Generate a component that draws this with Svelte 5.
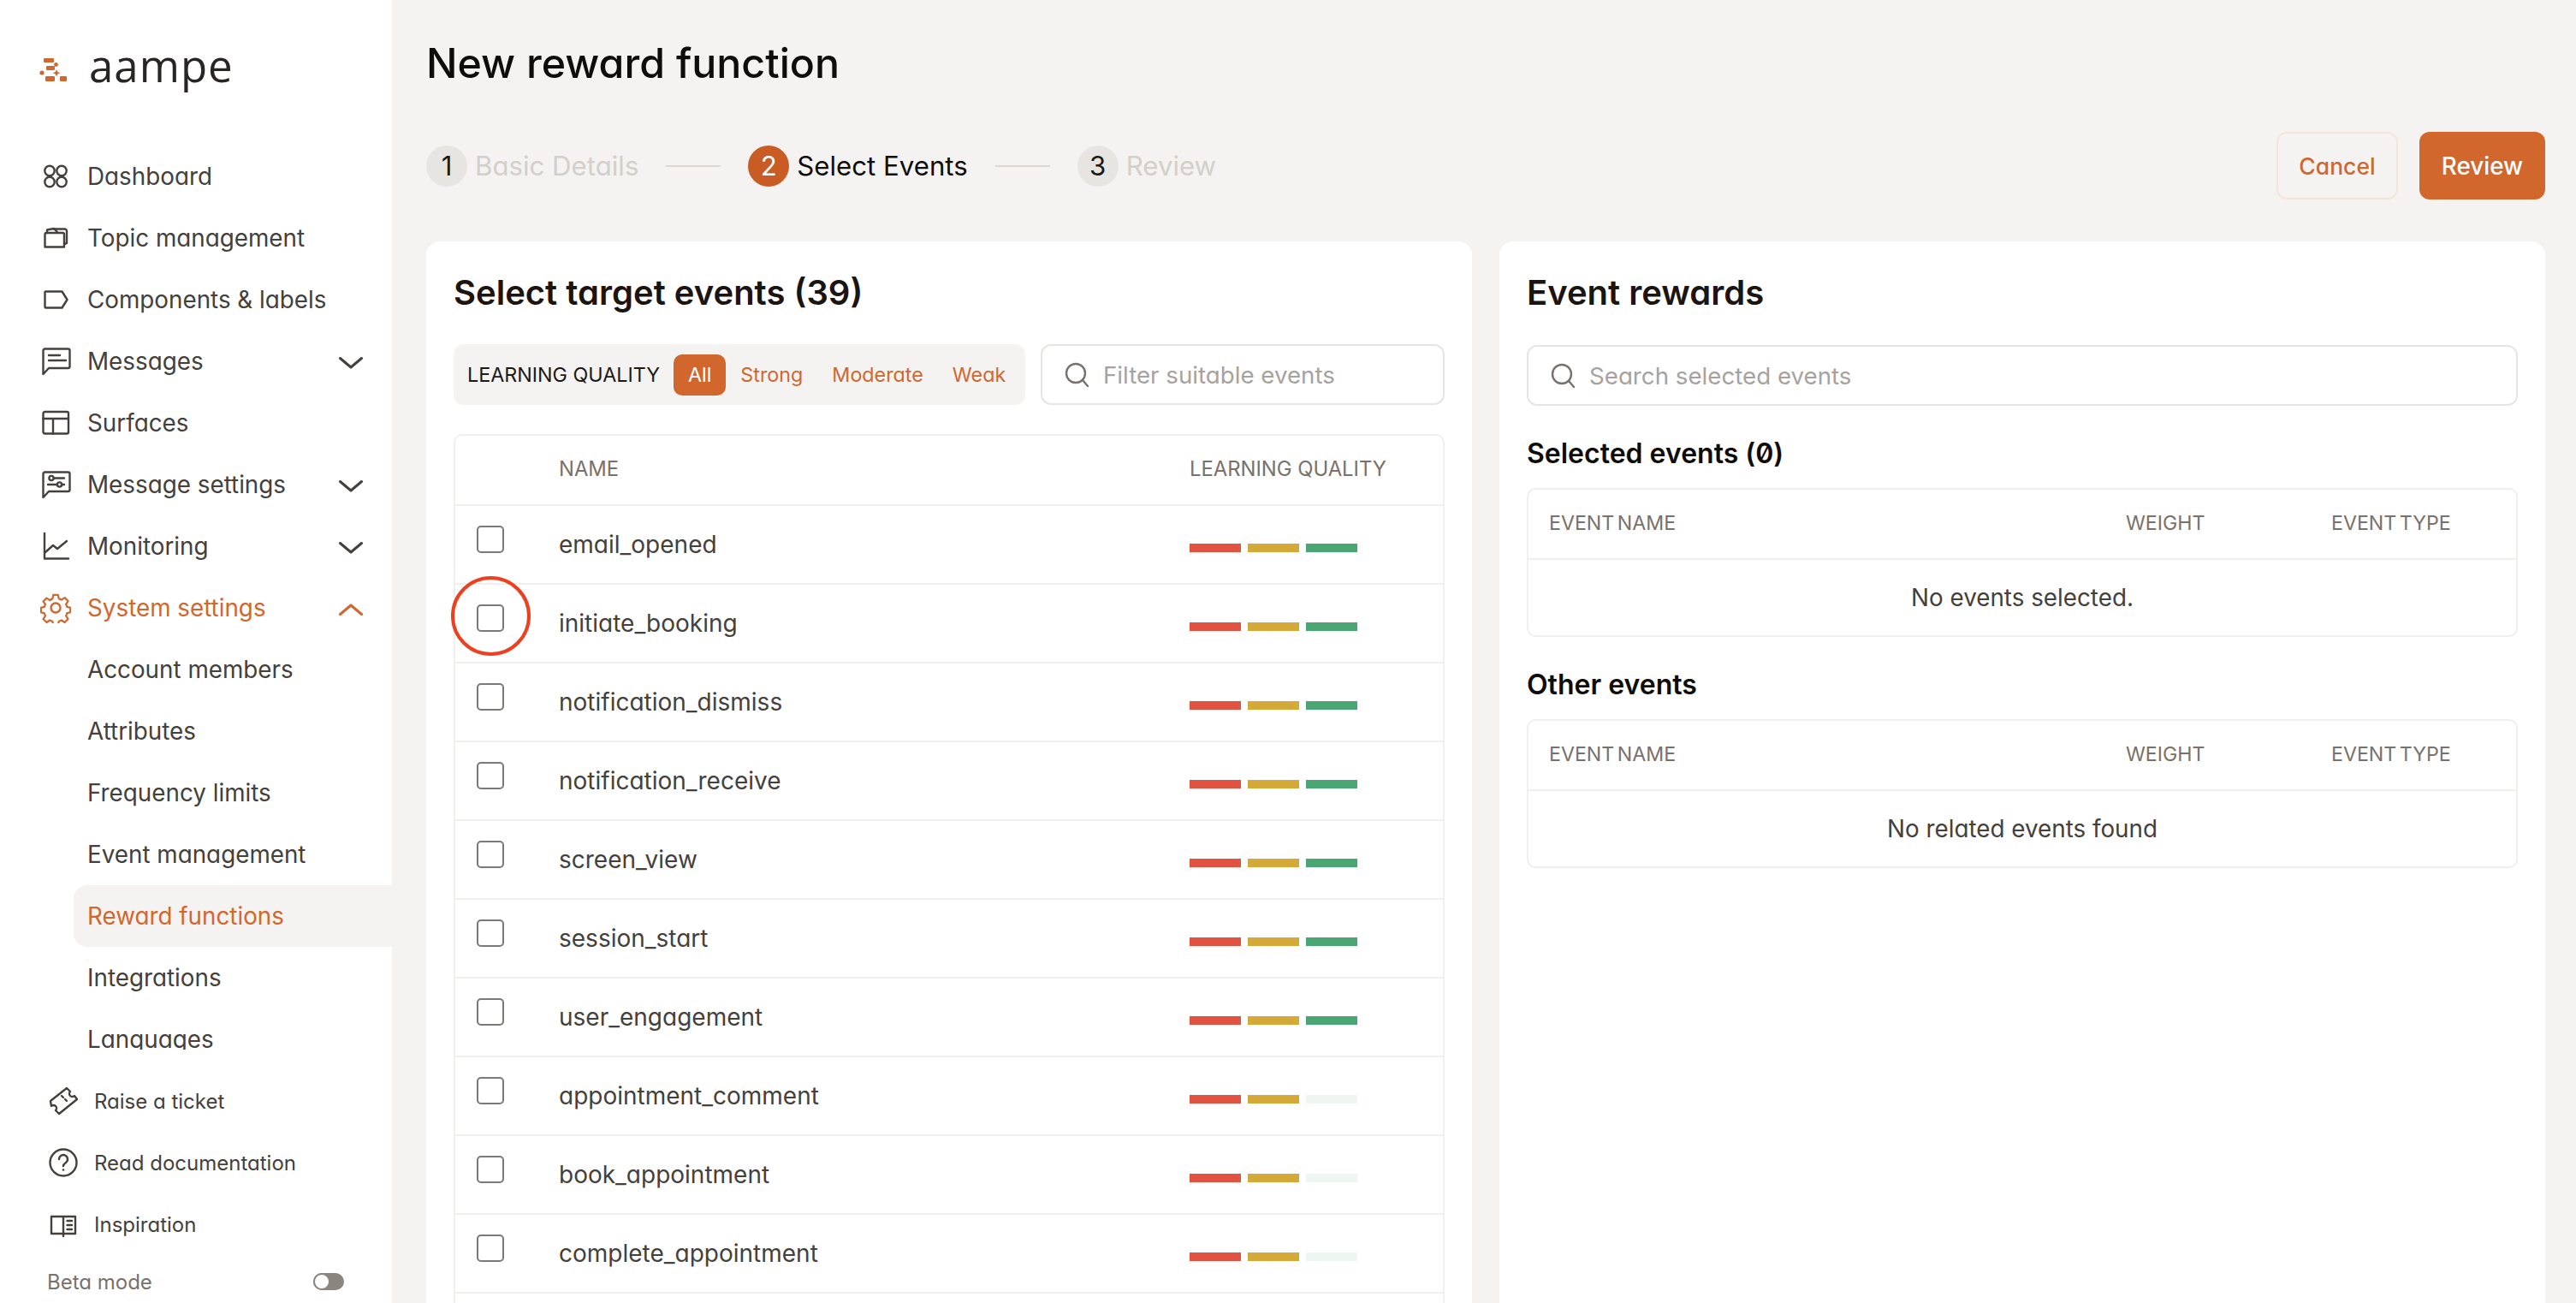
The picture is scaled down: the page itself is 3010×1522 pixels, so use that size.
<script lang="ts">
  const full = ["#e15241", "#d4a937", "#4aa672"];
  const partial = ["#e15241", "#d4a937", "#eef6f1"];

  const events = [
    { name: "email_opened", bars: full },
    { name: "initiate_booking", bars: full },
    { name: "notification_dismiss", bars: full },
    { name: "notification_receive", bars: full },
    { name: "screen_view", bars: full },
    { name: "session_start", bars: full },
    { name: "user_engagement", bars: full },
    { name: "appointment_comment", bars: partial },
    { name: "book_appointment", bars: partial },
    { name: "complete_appointment", bars: partial },
  ];

  const subItems = [
    "Account members",
    "Attributes",
    "Frequency limits",
    "Event management",
    "Reward functions",
    "Integrations",
    "Languages",
  ];
</script>

{#snippet chevron(up = false)}
  <svg class="chevron" class:up viewBox="0 0 28 16" width="28" height="16">
    <path d="M1.5 2.5 14 13 26.5 2.5" />
  </svg>
{/snippet}

{#snippet search()}
  <svg class="search" viewBox="0 0 28 30" width="28" height="30">
    <circle cx="13" cy="13" r="11" />
    <path d="M21 21l6 7" />
  </svg>
{/snippet}

<div class="page">
  <aside class="sidebar">
    <div class="logo">
      <svg viewBox="0 0 32 27" width="32" height="27">
        <rect x="5" y="0" width="12" height="5" rx="1" />
        <circle cx="19.5" cy="7.5" r="2.4" />
        <rect x="8" y="9" width="10" height="5" rx="1" />
        <circle cx="3" cy="17" r="2.6" />
        <path d="M20 13l1.3 3 3 1.3-3 1.3-1.3 3-1.3-3-3-1.3 3-1.3z" />
        <rect x="7" y="21" width="11" height="6" rx="1" />
        <rect x="24" y="21" width="8" height="6" rx="1" />
      </svg>
      <span>aampe</span>
    </div>

    <nav class="nav">
      <a class="item">
        <svg viewBox="0 0 36 36"><circle cx="11" cy="11.5" r="5.7" /><circle cx="25" cy="11.5" r="5.7" /><circle cx="11" cy="24.500" r="5.7" /><circle cx="25" cy="24.500" r="5.7" /></svg>
        Dashboard
      </a>
      <a class="item">
        <svg viewBox="0 0 36 36"><path d="M5.5 28.5V14a2 2 0 0 1 2-2h19a1.5 1.5 0 0 1 1.500 1.500V28.500z" /><path d="M8 12V8.500L16 7l4 4" /><path d="M16 7.500h13a2.500 2.500 0 0 1 2 2V24l-3 1" /></svg>
        Topic management
      </a>
      <a class="item">
        <svg viewBox="0 0 36 36"><path d="M6 8.500h19.500L31.500 18l-6 9.500H6.500a1 1 0 0 1-1-1V9a1 1 0 0 1 .5-.500z" /></svg>
        Components &amp; labels
      </a>
      <a class="item">
        <svg viewBox="0 0 36 36"><path d="M3.500 33V5.500a2 2 0 0 1 2-2h27a2 2 0 0 1 2 2V24a2 2 0 0 1-2 2H10z" /><path d="M10 11h13M10 17h20" /></svg>
        Messages
        {@render chevron()}
      </a>
      <a class="item">
        <svg viewBox="0 0 36 36"><rect x="3.500" y="5" width="29.500" height="25.500" rx="2" /><path d="M3.500 13h29.500M15 13v17.500" /></svg>
        Surfaces
      </a>
      <a class="item">
        <svg viewBox="0 0 36 36"><path d="M3.500 33V5.500a2 2 0 0 1 2-2h27a2 2 0 0 1 2 2V24a2 2 0 0 1-2 2H10z" /><circle cx="13" cy="10.500" r="2.600" /><path d="M16 10.500h12M9 18h11" /><circle cx="22.500" cy="18" r="2.600" /><path d="M25 18h3" /></svg>
        Message settings
        {@render chevron()}
      </a>
      <a class="item">
        <svg viewBox="0 0 36 36"><path d="M5 3v29.500h28" /><path d="M6 25l9-8 5 4 11-9" /></svg>
        Monitoring
        {@render chevron()}
      </a>
      <a class="item active">
        <svg viewBox="0 0 36 36">
          <circle cx="18" cy="18" r="5.500" />
          <path d="M15 1.500h6l1 4.800a12.500 12.500 0 0 1 3.300 1.400l4.100-2.700 4.200 4.200-2.700 4.100a12.500 12.500 0 0 1 1.400 3.300l4.200 1v5.800l-4.200 1a12.500 12.500 0 0 1-1.400 3.300l2.700 4.100-4.200 4.200-4.100-2.700a12.500 12.500 0 0 1-3.300 1.400l-1 4.300h-6l-1-4.300a12.500 12.500 0 0 1-3.300-1.400l-4.100 2.700-4.200-4.200 2.700-4.100a12.500 12.500 0 0 1-1.400-3.300l-4.200-1v-5.800l4.200-1a12.500 12.500 0 0 1 1.400-3.300L2.400 9.700l4.200-4.200 4.100 2.700A12.500 12.500 0 0 1 14 6.300z" transform="translate(1.300 1.500) scale(.93)" />
        </svg>
        System settings
        {@render chevron(true)}
      </a>
      {#each subItems as label}
        <a class="sub" class:current={label === "Reward functions"}>{label}</a>
      {/each}
    </nav>

    <div class="links">
      <a class="link">
        <svg viewBox="0 0 36 36"><path d="M3 18 22 3l4 4a3.500 3.500 0 0 0 5 5l3 4-21 17-4-4a3.500 3.500 0 0 0-5-5z" /><path d="M16 12l2 2M20 16l2 2" /></svg>
        Raise a ticket
      </a>
      <a class="link">
        <svg viewBox="0 0 36 36"><circle cx="18" cy="18" r="15.500" /><path d="M13 14a5 5 0 1 1 7.500 4.400c-1.600 1-2.500 1.900-2.500 3.600" /><circle class="dot" cx="18" cy="26.500" r="1.300" /></svg>
        Read documentation
      </a>
      <a class="link">
        <svg viewBox="0 0 36 36"><path d="M18 9H4v20h14zM18 9h14v20H18z" /><path d="M18 29v3M22.500 14h5.500M22.500 19h5.500M22.500 24h5.500" /></svg>
        Inspiration
      </a>
      <div class="beta">
        <span>Beta mode</span>
        <span class="toggle"><span></span></span>
      </div>
    </div>
    <span class="handle"></span>
  </aside>

  <main class="main">
    <h1>New reward function</h1>

    <div class="topbar">
      <ol class="steps">
        <li class="step muted"><b>1</b>Basic Details</li>
        <li class="rule"></li>
        <li class="step on"><b>2</b>Select Events</li>
        <li class="rule"></li>
        <li class="step muted"><b>3</b>Review</li>
      </ol>
      <div class="actions">
        <button class="cancel">Cancel</button>
        <button class="review">Review</button>
      </div>
    </div>

    <div class="cards">
      <section class="card">
        <h2>Select target events (39)</h2>
        <div class="filters">
          <div class="quality">
            <span class="q-label">LEARNING QUALITY</span>
            <span class="chip selected">All</span>
            <span class="chip">Strong</span>
            <span class="chip">Moderate</span>
            <span class="chip">Weak</span>
          </div>
          <div class="input grow">
            {@render search()}
            <span>Filter suitable events</span>
          </div>
        </div>

        <div class="table events">
          <div class="row head">
            <span></span>
            <span>NAME</span>
            <span>LEARNING QUALITY</span>
          </div>
          {#each events as event}
            <div class="row">
              <span class="box"></span>
              <span class="name">{event.name}</span>
              <span class="bars">
                {#each event.bars as color}
                  <i style="background: {color}"></i>
                {/each}
              </span>
            </div>
          {/each}
        </div>
        <span class="ring"></span>
      </section>

      <section class="card">
        <h2>Event rewards</h2>
        <div class="input wide">
          {@render search()}
          <span>Search selected events</span>
        </div>

        <h3 class="first">Selected events (<span class="zero">0</span>)</h3>
        <div class="table small">
          <div class="cols"><span>EVENT NAME</span><span>WEIGHT</span><span>EVENT TYPE</span></div>
          <p>No events selected.</p>
        </div>

        <h3>Other events</h3>
        <div class="table small">
          <div class="cols"><span>EVENT NAME</span><span>WEIGHT</span><span>EVENT TYPE</span></div>
          <p>No related events found</p>
        </div>
      </section>
    </div>
  </main>
</div>

<style>
  :global(body) {
    margin: 0;
    background: #f4f3f1;
  }

  .page {
    --orange: #d2672e;
    --text: #44403c;
    --line: #f1efec;
    display: grid;
    grid-template-columns: 458px 1fr;
    width: 3010px;
    height: 1522px;
    overflow: hidden;
    font-family: Inter, "Liberation Sans", sans-serif;
    font-feature-settings: "cv11" 1;
    color: var(--text);
    font-size: 27.8px;
    background: #f4f3f1;
  }

  .sidebar {
    position: relative;
    background: #fff;
    display: flex;
    flex-direction: column;
    height: 1522px;
    overflow: hidden;
  }

  .logo {
    display: flex;
    align-items: center;
    height: 50px;
    margin: 56px 0 64px 46px;
    gap: 26px;
  }

  .logo svg {
    fill: #d2672e;
  }

  .logo span {
    font-size: 51px;
    letter-spacing: 1px;
    margin-bottom: 10px;
    color: #292524;
    font-feature-settings: normal;
    font-family: "Open Sans", sans-serif;
  }

  .nav {
    height: 1056px;
    overflow: hidden;
    flex: none;
  }

  .item {
    display: flex;
    align-items: center;
    height: 72px;
    padding: 0 34px 0 47px;
    gap: 19px;
  }

  .item svg:not(.chevron),
  .link svg {
    width: 36px;
    height: 36px;
    flex: none;
    fill: none;
    stroke: currentColor;
    stroke-width: 2.4;
    stroke-linejoin: round;
    stroke-linecap: round;
  }

  .chevron {
    margin-left: auto;
    margin-top: 3px;
    fill: none;
    stroke: #44403c;
    stroke-width: 3;
    stroke-linecap: round;
    stroke-linejoin: round;
  }

  .chevron.up {
    transform: rotate(180deg);
    stroke: var(--orange);
  }

  .item.active {
    color: var(--orange);
  }

  .sub {
    display: flex;
    align-items: center;
    height: 72px;
    padding-left: 102px;
  }

  .sub.current {
    margin-left: 86px;
    padding-left: 16px;
    background: #f4f3f1;
    color: var(--orange);
    border-radius: 16px 0 0 16px;
  }

  .links {
    padding-top: 24px;
  }

  .link {
    display: flex;
    align-items: center;
    height: 72px;
    padding-left: 56px;
    gap: 18px;
    font-size: 24px;
  }

  .link .dot {
    fill: currentColor;
    stroke: none;
  }

  .beta {
    display: flex;
    align-items: center;
    justify-content: space-between;
    height: 62px;
    padding: 0 56px 0 55px;
    font-size: 24px;
    color: #78716c;
  }

  .toggle {
    width: 36px;
    height: 20px;
    border-radius: 10px;
    background: #8a857f;
    display: flex;
    align-items: center;
    padding: 0;
  }

  .toggle span {
    width: 20px;
    height: 20px;
    box-sizing: border-box;
    border-radius: 50%;
    background: #fff;
    border: 2px solid #8a857f;
  }

  .handle {
    position: absolute;
    left: 476px;
    top: 805px;
    width: 2px;
    height: 33px;
    background: #a8a29e;
  }

  .main {
    padding: 46px 36px 0 40px;
    min-width: 0;
  }

  h1 {
    margin: 0;
    font-size: 48.3px;
    line-height: 56px;
    font-weight: 500;
    color: #0f0d0c;
  }

  .topbar {
    display: flex;
    justify-content: space-between;
    align-items: center;
    margin-top: 52px;
  }

  .steps {
    display: flex;
    align-items: center;
    gap: 32px;
    list-style: none;
    margin: 0;
    padding: 0;
    font-size: 31.2px;
  }

  .step {
    display: flex;
    align-items: center;
    gap: 9px;
    color: #0f0d0c;
  }

  .step.muted {
    color: #d3cfc9;
  }

  .step b {
    display: flex;
    align-items: center;
    justify-content: center;
    width: 48px;
    height: 48px;
    border-radius: 50%;
    font-weight: 400;
    background: #e7e5e2;
    color: #1c1917;
  }

  .step.on b {
    background: #c95b24;
    color: #fff;
  }

  .rule {
    width: 64px;
    height: 2px;
    background: #dcd8d2;
  }

  .actions {
    display: flex;
    gap: 25px;
  }

  button {
    font: inherit;
    font-weight: 500;
    height: 79px;
    border-radius: 12px;
    cursor: pointer;
  }

  .cancel {
    width: 142px;
    background: transparent;
    border: 2px solid #f6e4d9;
    color: var(--orange);
    font-size: 26.5px;
  }

  .review {
    width: 147px;
    background: var(--orange);
    border: 0;
    color: #fff;
  }

  .cards {
    display: grid;
    grid-template-columns: 1fr 1fr;
    gap: 32px;
    margin-top: 49px;
  }

  .card {
    position: relative;
    background: #fff;
    border-radius: 16px;
    padding: 38px 32px 0;
    height: 1400px;
    box-sizing: border-box;
    display: flex;
    flex-direction: column;
  }

  h2 {
    margin: 0;
    font-size: 40px;
    line-height: 44px;
    font-weight: 600;
    color: #1c1411;
  }

  .filters {
    display: flex;
    gap: 18px;
    margin-top: 38px;
  }

  .quality {
    display: flex;
    align-items: center;
    width: 668px;
    height: 71px;
    box-sizing: border-box;
    padding: 0 16px;
    background: #f4f3f1;
    border-radius: 12px;
    font-size: 23.3px;
  }

  .q-label {
    color: #1c1917;
    width: 241px;
    flex: none;
    white-space: nowrap;
  }

  .chip {
    color: var(--orange);
    padding: 0 17px;
    height: 48px;
    line-height: 48px;
    border-radius: 10px;
  }

  .chip.selected {
    background: var(--orange);
    color: #fff;
  }

  .input {
    display: flex;
    align-items: center;
    gap: 17px;
    height: 71px;
    box-sizing: border-box;
    padding-left: 26px;
    border: 2px solid #e7e5e2;
    border-radius: 12px;
    color: #a8a29e;
    font-size: 27.7px;
  }

  .input.grow {
    flex: 1;
  }

  .input.wide {
    margin-top: 39px;
  }

  .search {
    flex: none;
    fill: none;
    stroke: #78716c;
    stroke-width: 2.4;
    stroke-linecap: round;
  }

  .table {
    border: 2px solid var(--line);
    border-radius: 10px;
    box-sizing: border-box;
  }

  .events {
    margin-top: 34px;
    height: 1300px;
  }

  .row {
    display: grid;
    grid-template-columns: 121px 737px 1fr;
    align-items: center;
    height: 92px;
    box-sizing: border-box;
    border-bottom: 2px solid var(--line);
  }

  .row.head {
    height: 82px;
    padding-bottom: 3px;
    font-size: 23.8px;
    color: #78716c;
  }

  .box {
    box-sizing: border-box;
    width: 32px;
    height: 32px;
    margin: -12px 0 0 25px;
    border: 2px solid #7b7875;
    border-radius: 5px;
  }

  .name {
    font-size: 28px;
  }

  .bars {
    display: flex;
    gap: 8px;
    margin-top: 8px;
  }

  .bars i {
    width: 60px;
    height: 10px;
  }

  .ring {
    position: absolute;
    left: 29px;
    top: 391px;
    width: 93px;
    height: 93px;
    box-sizing: border-box;
    border: 4px solid #ed4020;
    border-radius: 50%;
  }

  h3 {
    margin: 36px 0 0;
    font-size: 32px;
    line-height: 40px;
    font-weight: 600;
    color: #0f0d0c;
  }

  h3.first {
    margin-top: 36px;
  }

  .zero {
    font-feature-settings: "zero" 1, "cv11" 1;
  }

  .small {
    margin-top: 20px;
    height: 174px;
  }

  .cols {
    display: grid;
    grid-template-columns: 674px 240px 1fr;
    align-items: center;
    height: 82px;
    box-sizing: border-box;
    padding: 0 0 2px 24px;
    border-bottom: 2px solid var(--line);
    font-size: 23.2px;
    word-spacing: -3px;
    color: #78716c;
  }

  .small p {
    margin: 0;
    height: 88px;
    display: flex;
    align-items: center;
    justify-content: center;
  }
</style>
